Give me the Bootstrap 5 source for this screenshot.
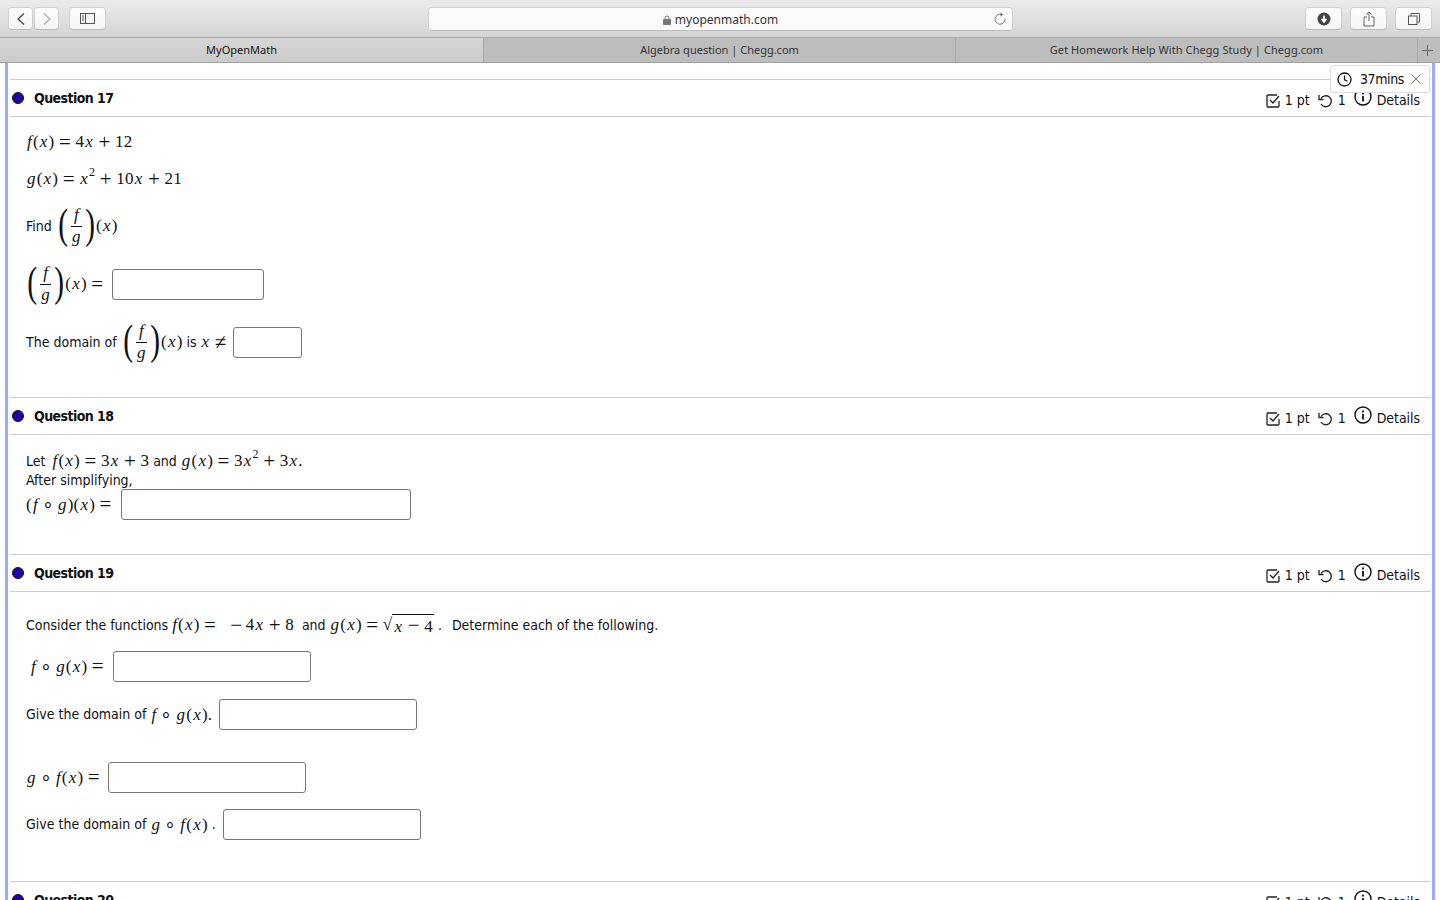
<!DOCTYPE html>
<html lang="en"><head><meta charset="utf-8"><title>MyOpenMath</title>
<link href="https://cdn.jsdelivr.net/npm/bootstrap@5.3.0/dist/css/bootstrap.min.css" rel="stylesheet">
<style>
html,body{height:900px;overflow:hidden;background:#fff}
body{font-family:"DejaVu Sans Condensed","DejaVu Sans",sans-serif;font-stretch:condensed;font-size:14px;color:#111;position:relative}
.toolbar{height:38px;background:linear-gradient(#ececec,#d4d4d4);border-bottom:1px solid #a9a9a9;padding:7px 8px 0 8px;font-family:"Noto Sans",sans-serif;font-stretch:normal}
.tbtn{height:23px;background:linear-gradient(#fff,#f4f4f4);border:1px solid #d0d0d0;border-bottom-color:#bbb;border-radius:4px;display:flex;align-items:center;justify-content:center;width:37px}
.tnav{width:25px}.tnav2{margin-left:1px}.tside{margin-left:10px}
.addrwrap{padding-left:322px}
.addr{width:585px;height:24px;background:#fbfbfb;border:1px solid #d0d0d0;border-bottom-color:#bbb;border-radius:4px;font-size:12px;color:#333;position:relative;line-height:23px;text-align:center}
.reload{position:absolute;right:5px;top:4px}
.tabsbar{height:25px;background:#bdbdbd;border-bottom:1px solid #a0a0a0;font-size:11px;line-height:24px;color:#333;font-family:"Noto Sans",sans-serif;font-stretch:normal}
.tabitem{text-align:center;border-right:1px solid #a8a8a8}
.tabon{width:484px;background:linear-gradient(#d6d6d6,#cbcbcb);color:#111}
.tabw{width:472px}.tabx{width:462px;letter-spacing:.07px}.tabplus{flex:1;display:flex;align-items:center;justify-content:center;padding-right:3px}
.page{margin:0 5px;border-left:3px solid #99aaff;border-right:3px solid #99aaff;height:838px;padding:16px 1px 0 2px}
.qhead{height:38px;border-top:1px solid #ccc;border-bottom:1px solid #ccc;padding:0 11px 0 2px;display:flex;align-items:center;justify-content:space-between}
.qdot{width:12px;height:12px;border-radius:50%;background:#2200aa;border:1px solid #111}
.qtitle{font-weight:700;font-size:14px;margin-left:10px;letter-spacing:-.55px}
.qmeta{display:flex;align-items:center;padding-top:5px;font-size:14px}
.gapck{margin-left:5px}.gapdet{margin-left:5px;letter-spacing:-.05px}.gappt{margin-left:8px}.gaprl{margin-left:5px}
.icoinfo{margin-top:-7px}
.q17{height:280px}.q18{height:119px;padding-top:16px}.q19{height:289px;padding-top:21px}
.qbody{padding-left:16px;padding-right:16px}
.mline{display:flex;align-items:center;white-space:nowrap}
.l50{height:50px}.l24{height:24px}.l70{height:70px}.l46{height:46px}.l20{height:20px}.l18{height:18px}.l31{height:31px}
.mt14{margin-top:14px}.mt17{margin-top:17px}.mt32{margin-top:32px}.mt16{margin-top:16px}
.mth{font-family:"Liberation Serif",serif;font-size:17px;letter-spacing:.2px;display:inline-flex;align-items:center;white-space:pre;font-stretch:normal}
.mth i{font-style:italic;padding:0 1px}
.op{margin:0 4.500px;font-size:21px;line-height:1}
.opu{margin:0 3.500px 0 9.500px;font-size:21px;line-height:1}
.oc{margin:0 3px;font-size:19px;line-height:1}
sup.ex{font-size:12px;top:-.55em;line-height:0;position:relative;vertical-align:baseline}
.frac{display:inline-flex;flex-direction:column;align-items:center;line-height:18px;margin:0 2px}
.frac>i:first-child{border-bottom:1px solid #111;padding:0 3px 2px}
.frac>i:last-child{padding-top:1px}
.bigp{font-size:42px;font-weight:300;line-height:1;transform:scaleX(.7) translateY(-2px);margin:0 -1px}
.gapm{margin-left:5px}.gapl{margin-left:6px}.gap3{margin-left:3px}.gap5{margin-left:5px}.gap7{margin-left:7px}.gap2{margin-left:2px}.gap10{margin-left:10px}
.box{height:31px;border:1px solid #777;border-radius:3px;background:#fff;padding:0;outline:0}
.w152{width:152px}.w69{width:69px}.w290{width:290px}.w198{width:198px}
.rootbar{border-top:1px solid #111;padding:0 1px;line-height:16px}
.timer{position:absolute;left:1330px;top:65px;width:100px;height:28px;background:#fff;border:1px solid #ddd;border-radius:3px;display:flex;align-items:center;padding-left:6px;font-size:14px}
.tmtxt{margin-left:8px;letter-spacing:-.4px}.tmx{margin-left:7px}
svg{display:block;flex:none}
.lock{display:inline-block;vertical-align:-1px;margin-right:4px}
</style></head><body>
<div class="toolbar d-flex align-items-start">
  <div class="tbtn tnav"><svg width="10" height="14" viewBox="0 0 10 14"><path d="M8 1.500 2 7l6 5.500" fill="none" stroke="#444" stroke-width="1.300"/></svg></div>
  <div class="tbtn tnav tnav2"><svg width="10" height="14" viewBox="0 0 10 14"><path d="M2 1.500 8 7l-6 5.500" fill="none" stroke="#aaa" stroke-width="1.300"/></svg></div>
  <div class="tbtn tside"><svg width="15" height="11" viewBox="0 0 15 11"><rect x=".5" y=".5" width="14" height="10" fill="none" stroke="#555"/><path d="M5.500 .5v10M2 3h2M2 5h2M2 7h2" stroke="#555" fill="none"/></svg></div>
  <div class="flex-grow-1 addrwrap"><div class="addr"><svg class="lock" width="8" height="10" viewBox="0 0 8 10"><path d="M2 4.500V3a2 2 0 0 1 4 0v1.500" fill="none" stroke="#777"/><rect y="4" width="8" height="6" rx="1" fill="#777"/></svg>myopenmath.com<span class="reload"><svg width="14" height="14" viewBox="0 0 14 14"><path d="M8.500 2.500A5 5 0 1 0 12 7" fill="none" stroke="#777" stroke-width="1"/><path d="M7.500 .5 10.500 2.500 7.500 4.500z" fill="#777"/></svg></span></div></div>
  <div class="tbtn"><svg width="14" height="14" viewBox="0 0 14 14"><circle cx="7" cy="7" r="6.500" fill="#444"/><path d="M7 3.500v5M4.500 6.800 7 9.800l2.500-3" stroke="#fff" stroke-width="1.800" fill="none"/></svg></div>
  <div class="tbtn ms-2"><svg width="12" height="16" viewBox="0 0 12 16"><path d="M4 6H1v9h10V6H8M6 10V1M3.500 3.500 6 1l2.500 2.500" fill="none" stroke="#666"/></svg></div>
  <div class="tbtn ms-2"><svg width="12" height="12" viewBox="0 0 12 12"><rect x=".5" y="3" width="8.500" height="8.500" fill="none" stroke="#555"/><path d="M3 3V.5h8.500V9H9" fill="none" stroke="#555"/></svg></div>
</div>
<div class="tabsbar d-flex">
  <div class="tabitem tabon">MyOpenMath</div>
  <div class="tabitem tabw">Algebra question | Chegg.com</div>
  <div class="tabitem tabx">Get Homework Help With Chegg Study | Chegg.com</div>
  <div class="tabplus"><svg width="11" height="11" viewBox="0 0 11 11"><path d="M5.500 0v11M0 5.500h11" stroke="#666"/></svg></div>
</div>
<div class="timer"><svg width="15" height="15" viewBox="0 0 15 15"><circle cx="7.500" cy="7.500" r="6.500" fill="none" stroke="#111" stroke-width="1.300"/><path d="M7.500 3.500v4.300l3 1.500" fill="none" stroke="#111" stroke-width="1.200"/></svg><span class="tmtxt">37mins</span><svg class="tmx" width="10" height="10" viewBox="0 0 10 10"><path d="M.5 .5l9 9M9.500 .5l-9 9" stroke="#777" stroke-width="1"/></svg></div>

<div class="page">

<div class="qhead"><div class="d-flex align-items-center"><span class="qdot"></span><span class="qtitle">Question 17</span></div>
<div class="qmeta"><svg width="14" height="14" viewBox="0 0 14 14"><path d="M13 7v5a1 1 0 0 1-1 1H2a1 1 0 0 1-1-1V2a1 1 0 0 1 1-1h9" fill="none" stroke="#222" stroke-width="1.300"/><path d="M4 6l3 3 6-7" fill="none" stroke="#222" stroke-width="1.300"/></svg><span class="gapck">1 pt</span><svg class="gappt" width="15" height="14" viewBox="0 0 15 14"><path d="M3 4.500A5.500 5.500 0 1 1 3 10" fill="none" stroke="#222" stroke-width="1.300"/><path d="M1 1v4.500h4.500" fill="none" stroke="#222" stroke-width="1.300"/></svg><span class="gaprl">1</span><svg class="ms-2 icoinfo" width="18" height="18" viewBox="0 0 18 18"><circle cx="9" cy="9" r="8" fill="none" stroke="#111" stroke-width="1.400"/><path d="M9 8v5.500M9 4.500v2" stroke="#111" stroke-width="1.800"/></svg><span class="gapdet">Details</span></div></div>
<div class="qbody q17">
  <div class="mline l50"><span class="mth"><i>f</i>(<i>x</i>)<span class="op">=</span>4<i>x</i><span class="op">+</span>12</span></div>
  <div class="mline l24"><span class="mth"><i>g</i>(<i>x</i>)<span class="op">=</span><i>x</i><sup class="ex">2</sup><span class="op">+</span>10<i>x</i><span class="op">+</span>21</span></div>
  <div class="mline l70">Find<span class="mth gapm"><span class="bigp">(</span><span class="frac"><i>f</i><i>g</i></span><span class="bigp">)</span>(<i>x</i>)</span></div>
  <div class="mline l46"><span class="mth"><span class="bigp">(</span><span class="frac"><i>f</i><i>g</i></span><span class="bigp">)</span>(<i>x</i>)<span class="op">=</span></span><input class="box ms-1 w152" aria-label="answer"></div>
  <div class="mline l70">The domain of<span class="mth gapm"><span class="bigp">(</span><span class="frac"><i>f</i><i>g</i></span><span class="bigp">)</span>(<i>x</i>)</span><span class="ms-1">is</span><span class="mth ms-1"><i>x</i><span class="op">≠</span></span><input class="box gap2 w69" aria-label="answer"></div>
</div>

<div class="qhead"><div class="d-flex align-items-center"><span class="qdot"></span><span class="qtitle">Question 18</span></div>
<div class="qmeta"><svg width="14" height="14" viewBox="0 0 14 14"><path d="M13 7v5a1 1 0 0 1-1 1H2a1 1 0 0 1-1-1V2a1 1 0 0 1 1-1h9" fill="none" stroke="#222" stroke-width="1.300"/><path d="M4 6l3 3 6-7" fill="none" stroke="#222" stroke-width="1.300"/></svg><span class="gapck">1 pt</span><svg class="gappt" width="15" height="14" viewBox="0 0 15 14"><path d="M3 4.500A5.500 5.500 0 1 1 3 10" fill="none" stroke="#222" stroke-width="1.300"/><path d="M1 1v4.500h4.500" fill="none" stroke="#222" stroke-width="1.300"/></svg><span class="gaprl">1</span><svg class="ms-2 icoinfo" width="18" height="18" viewBox="0 0 18 18"><circle cx="9" cy="9" r="8" fill="none" stroke="#111" stroke-width="1.400"/><path d="M9 8v5.500M9 4.500v2" stroke="#111" stroke-width="1.800"/></svg><span class="gapdet">Details</span></div></div>
<div class="qbody q18">
  <div class="mline l20">Let<span class="mth gapl"><i>f</i>(<i>x</i>)<span class="op">=</span>3<i>x</i><span class="op">+</span>3</span><span class="ms-1">and</span><span class="mth ms-1"><i>g</i>(<i>x</i>)<span class="op">=</span>3<i>x</i><sup class="ex">2</sup><span class="op">+</span>3<i>x</i>.</span></div>
  <div class="mline l18">After simplifying,</div>
  <div class="mline l31"><span class="mth">(<i>f</i><span class="oc">∘</span><i>g</i>)(<i>x</i>)<span class="op">=</span></span><input class="box gap5 w290" aria-label="answer"></div>
</div>

<div class="qhead"><div class="d-flex align-items-center"><span class="qdot"></span><span class="qtitle">Question 19</span></div>
<div class="qmeta"><svg width="14" height="14" viewBox="0 0 14 14"><path d="M13 7v5a1 1 0 0 1-1 1H2a1 1 0 0 1-1-1V2a1 1 0 0 1 1-1h9" fill="none" stroke="#222" stroke-width="1.300"/><path d="M4 6l3 3 6-7" fill="none" stroke="#222" stroke-width="1.300"/></svg><span class="gapck">1 pt</span><svg class="gappt" width="15" height="14" viewBox="0 0 15 14"><path d="M3 4.500A5.500 5.500 0 1 1 3 10" fill="none" stroke="#222" stroke-width="1.300"/><path d="M1 1v4.500h4.500" fill="none" stroke="#222" stroke-width="1.300"/></svg><span class="gaprl">1</span><svg class="ms-2 icoinfo" width="18" height="18" viewBox="0 0 18 18"><circle cx="9" cy="9" r="8" fill="none" stroke="#111" stroke-width="1.400"/><path d="M9 8v5.500M9 4.500v2" stroke="#111" stroke-width="1.800"/></svg><span class="gapdet">Details</span></div></div>
<div class="qbody q19">
  <div class="mline l24">Consider the functions<span class="mth gap3"><i>f</i>(<i>x</i>)<span class="op">=</span><span class="opu">−</span>4<i>x</i><span class="op">+</span>8</span><span class="ms-2">and</span><span class="mth ms-1"><i>g</i>(<i>x</i>)<span class="op">=</span>√<span class="rootbar"><i>x</i><span class="op">−</span>4</span></span><span class="ms-1">.</span><span class="gap10">Determine each of the following.</span></div>
  <div class="mline l31 mt14"><span class="mth ms-1"><i>f</i><span class="oc">∘</span><i>g</i>(<i>x</i>)<span class="op">=</span></span><input class="box gap5 w198" aria-label="answer"></div>
  <div class="mline l31 mt17">Give the domain of<span class="mth ms-1"><i>f</i><span class="oc">∘</span><i>g</i>(<i>x</i>).</span><input class="box gap7 w198" aria-label="answer"></div>
  <div class="mline l31 mt32"><span class="mth"><i>g</i><span class="oc">∘</span><i>f</i>(<i>x</i>)<span class="op">=</span></span><input class="box ms-1 w198" aria-label="answer"></div>
  <div class="mline l31 mt16">Give the domain of<span class="mth ms-1"><i>g</i><span class="oc">∘</span><i>f</i>(<i>x</i>)</span><span class="ms-1">.</span><input class="box gap7 w198" aria-label="answer"></div>
</div>

<div class="qhead"><div class="d-flex align-items-center"><span class="qdot"></span><span class="qtitle">Question 20</span></div>
<div class="qmeta"><svg width="14" height="14" viewBox="0 0 14 14"><path d="M13 7v5a1 1 0 0 1-1 1H2a1 1 0 0 1-1-1V2a1 1 0 0 1 1-1h9" fill="none" stroke="#222" stroke-width="1.300"/><path d="M4 6l3 3 6-7" fill="none" stroke="#222" stroke-width="1.300"/></svg><span class="gapck">1 pt</span><svg class="gappt" width="15" height="14" viewBox="0 0 15 14"><path d="M3 4.500A5.500 5.500 0 1 1 3 10" fill="none" stroke="#222" stroke-width="1.300"/><path d="M1 1v4.500h4.500" fill="none" stroke="#222" stroke-width="1.300"/></svg><span class="gaprl">1</span><svg class="ms-2 icoinfo" width="18" height="18" viewBox="0 0 18 18"><circle cx="9" cy="9" r="8" fill="none" stroke="#111" stroke-width="1.400"/><path d="M9 8v5.500M9 4.500v2" stroke="#111" stroke-width="1.800"/></svg><span class="gapdet">Details</span></div></div>
</div>
</body></html>
